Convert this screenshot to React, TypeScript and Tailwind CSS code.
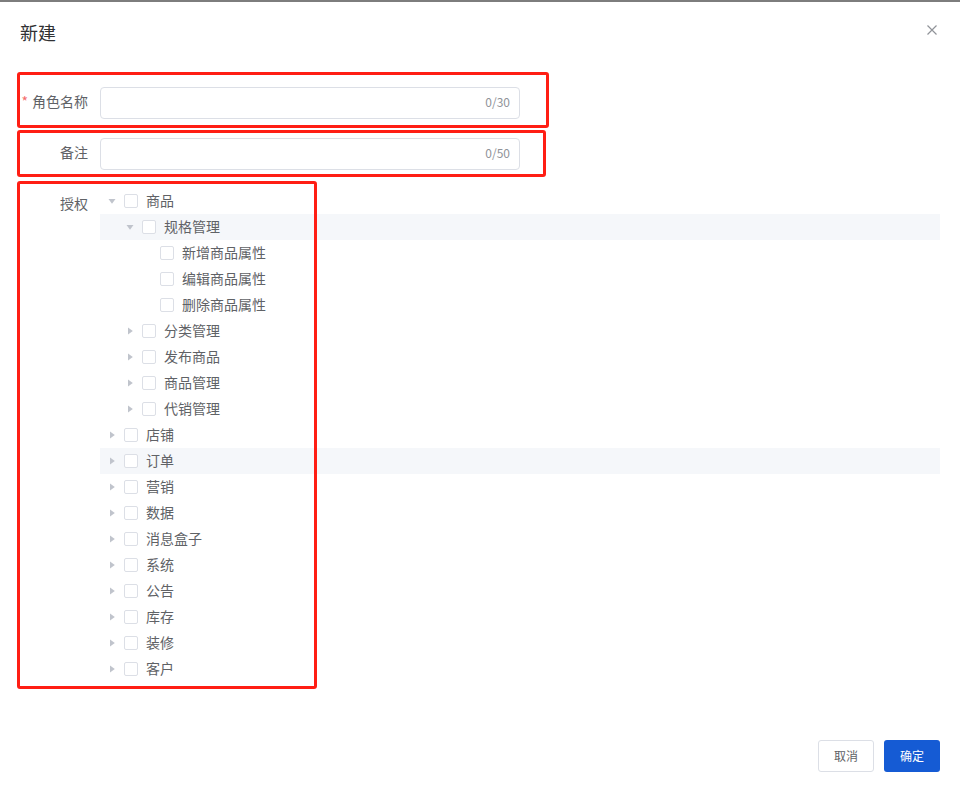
import React from 'react';

type Node = { label: string; level: number; caret: 'open' | 'closed' | 'none'; hover?: boolean };

const nodes: Node[] = [
  { label: '商品', level: 0, caret: 'open' },
  { label: '规格管理', level: 1, caret: 'open', hover: true },
  { label: '新增商品属性', level: 2, caret: 'none' },
  { label: '编辑商品属性', level: 2, caret: 'none' },
  { label: '删除商品属性', level: 2, caret: 'none' },
  { label: '分类管理', level: 1, caret: 'closed' },
  { label: '发布商品', level: 1, caret: 'closed' },
  { label: '商品管理', level: 1, caret: 'closed' },
  { label: '代销管理', level: 1, caret: 'closed' },
  { label: '店铺', level: 0, caret: 'closed' },
  { label: '订单', level: 0, caret: 'closed', hover: true },
  { label: '营销', level: 0, caret: 'closed' },
  { label: '数据', level: 0, caret: 'closed' },
  { label: '消息盒子', level: 0, caret: 'closed' },
  { label: '系统', level: 0, caret: 'closed' },
  { label: '公告', level: 0, caret: 'closed' },
  { label: '库存', level: 0, caret: 'closed' },
  { label: '装修', level: 0, caret: 'closed' },
  { label: '客户', level: 0, caret: 'closed' },
];

const indent = ['pl-0', 'pl-[18px]', 'pl-[36px]'];

function Caret({ kind }: { kind: Node['caret'] }) {
  return (
    <span className="w-[24px] h-[26px] flex items-center justify-center">
      {kind !== 'none' && (
        <svg width="8" height="8" viewBox="0 0 8 8" className={kind === 'open' ? 'rotate-90' : ''}>
          <polygon points="2,0.5 6.8,4 2,7.5" fill="#c0c4cc" />
        </svg>
      )}
    </span>
  );
}

function TreeRow({ node }: { node: Node }) {
  return (
    <div className={`h-[26px] flex items-center ${indent[node.level]} ${node.hover ? 'bg-[#f5f7fa]' : ''}`}>
      <Caret kind={node.caret} />
      <span className="w-[14px] h-[14px] border border-[#dcdfe6] rounded-[2px] bg-white mr-[8px] shrink-0" />
      <span className="self-start text-[14px] text-[#606266] leading-[24px]">{node.label}</span>
    </div>
  );
}

function CountInput({ max }: { max: number }) {
  return (
    <div className="w-[420px] h-[32px] border border-[#dcdfe6] rounded-[4px] flex items-start justify-end pr-[9px]">
      <span className="text-[12px] text-[#909399] leading-[28px]">0/{max}</span>
    </div>
  );
}

export default function App() {
  return (
    <div
      className="relative w-[960px] h-[790px] bg-white flex flex-col"
      style={{ fontFamily: '"Noto Sans CJK SC", "Noto Sans", sans-serif' }}
    >
      <div className="h-[2px] bg-[#7d7d7d]" />

      {/* Header */}
      <div className="flex items-start justify-between pt-[18px] pl-[20px] pr-[20px] h-[44px]">
        <h2 className="text-[18px] leading-[24px] text-[#303133]">新建</h2>
        <div className="w-[16px] flex justify-center mt-[5px]">
          <svg width="10" height="10" viewBox="0 0 10 10">
            <path d="M0.5 0.5 L9.5 9.5 M9.5 0.5 L0.5 9.5" stroke="#909399" strokeWidth="1.2" />
          </svg>
        </div>
      </div>

      {/* Form */}
      <div className="px-[20px] pt-[41px] flex-1">
        <div className="flex items-start mb-[19px]">
          <label className="w-[80px] pr-[12px] text-right text-[14px] text-[#606266] leading-[28px]">
            <span className="text-[#f56c6c] mr-[4px]">*</span>角色名称
          </label>
          <CountInput max={30} />
        </div>
        <div className="flex items-start mb-[18px]">
          <label className="w-[80px] pr-[12px] text-right text-[14px] text-[#606266] leading-[28px]">备注</label>
          <CountInput max={50} />
        </div>
        <div className="flex items-start">
          <label className="w-[80px] pr-[12px] text-right text-[14px] text-[#606266] leading-[30px]">授权</label>
          <div className="flex-1">
            {nodes.map((n, i) => (
              <TreeRow key={i} node={n} />
            ))}
          </div>
        </div>
      </div>

      {/* Footer */}
      <div className="flex justify-end gap-[10px] px-[20px] pb-[18px]">
        <button className="w-[56px] h-[32px] border border-[#dcdfe6] rounded-[3px] bg-white text-[12px] text-[#606266] leading-[28px]">
          取消
        </button>
        <button className="w-[56px] h-[32px] rounded-[3px] bg-[#155bd4] text-[12px] text-white leading-[30px]">确定</button>
      </div>

      {/* Annotation boxes */}
      <div className="absolute left-[17px] top-[72px] w-[532px] h-[56px] border-[3px] border-[#ff1e14] rounded-[3px] pointer-events-none" />
      <div className="absolute left-[17px] top-[130px] w-[529px] h-[47px] border-[3px] border-[#ff1e14] rounded-[3px] pointer-events-none" />
      <div className="absolute left-[17px] top-[181px] w-[300px] h-[508px] border-[3px] border-[#ff1e14] rounded-[3px] pointer-events-none" />
    </div>
  );
}
